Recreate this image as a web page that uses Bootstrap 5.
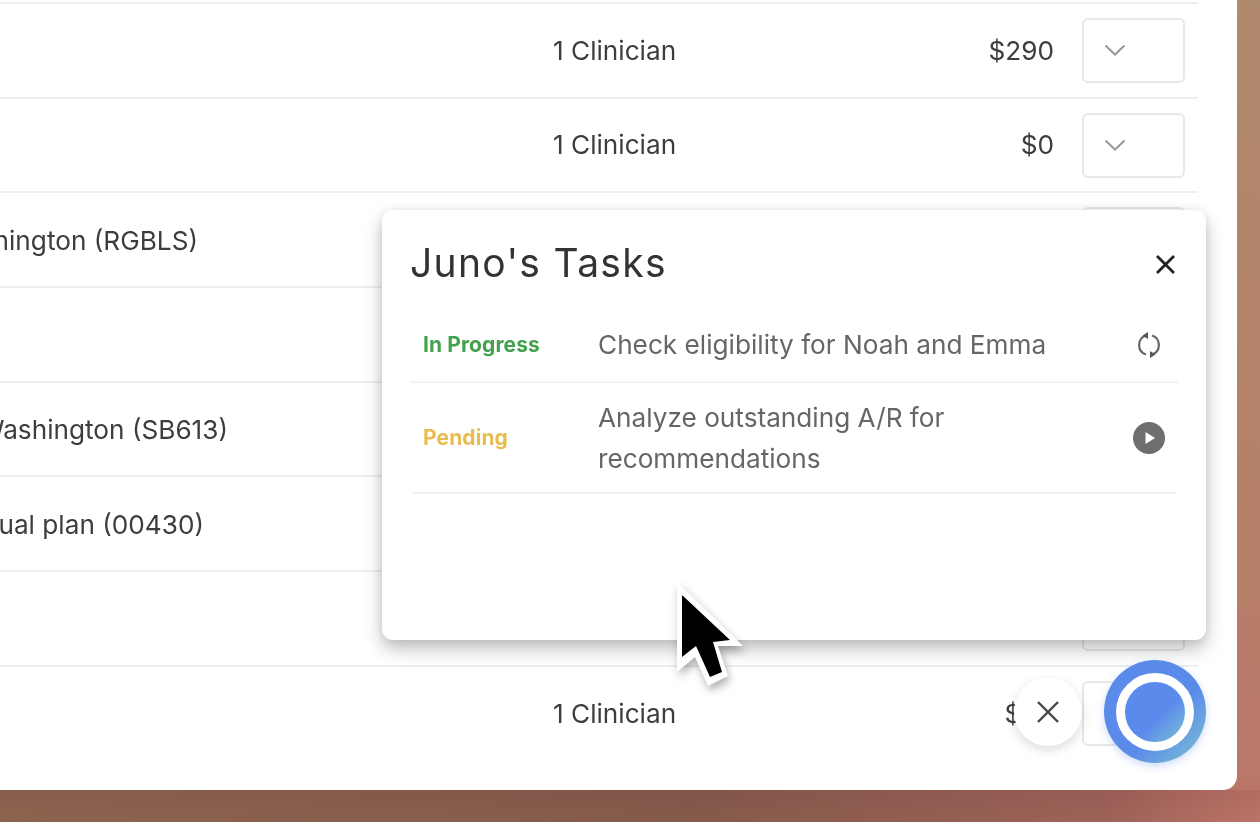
<!doctype html>
<html lang="en">
<head>
<meta charset="utf-8">
<title>Juno's Tasks</title>
<link href="https://cdn.jsdelivr.net/npm/bootstrap@5.3.0/dist/css/bootstrap.min.css" rel="stylesheet">
<style>
html,body{height:100%;margin:0;overflow:hidden}
body{width:1260px;height:822px;position:relative;font-family:Inter,"Liberation Sans",sans-serif;color:#3d3d3d;
 background:linear-gradient(180deg,rgba(125,80,68,.25),rgba(150,110,80,.2)) bottom/100% 32px no-repeat,linear-gradient(90deg,#8b624f,#82574a 55%,#a0605a 88%,#c5766c) bottom/100% 32px no-repeat,linear-gradient(180deg,#b08a6d,#b67e69 70%,#bb7669)}
.sheet{width:1237px;height:790px;background:#fff;border-bottom-right-radius:14px;padding-top:2px;overflow:hidden}
.plan-row{position:relative;height:94.7px;width:1198px;border-top:2px solid #eeeeee;font-size:26.200px}
.plan-name{flex:0 0 auto;justify-content:flex-end;overflow:hidden;white-space:nowrap;margin-top:2px}
.w-rgbls{width:198px}.w-sb{width:228px}.w-annual{width:204px}
.plan-seats{position:absolute;left:553px;white-space:nowrap}
.plan-price{position:absolute;right:144px;white-space:nowrap}
.plan-select{position:absolute;left:1082px;width:103px;height:65px;border:2px solid #e8e8e8;border-radius:6px;background:#fff;padding:0 0 0 20px;display:flex;align-items:center}
.task-panel{position:absolute;left:382px;top:210px;width:824px;height:430px;border:0;border-radius:11px;background:#fff;box-shadow:0 9px 18px rgba(0,0,0,.25),0 0 12px rgba(0,0,0,.08);padding:0 28px}
.panel-title{font-size:39px;font-weight:400;letter-spacing:1.300px;color:#333;margin:0;line-height:1}
.panel-head{height:104px;padding-bottom:0}
.panel-close{background:none;border:0;padding:0;line-height:0;margin-right:2px;margin-top:4px}
.list-group-flush>.task-row,.list-group-flush>.task-row:last-child{border-color:#f2f2f2;border-width:0 0 2px;padding:0;display:flex;align-items:center;background:transparent}
.list-group-flush>.task-a{height:69px;padding-bottom:6px}
.list-group-flush>.task-b{height:111px;padding-top:1px}
.task-status{flex:0 0 188px;padding-left:13px;font-size:21px;font-weight:700;letter-spacing:.1px}
.st-green{color:#43a24d}.st-yellow{color:#e8bd50}
.task-text{flex:1;font-size:26.200px;line-height:41px;color:#666;padding-right:60px}
.task-icon{flex:0 0 32px;display:flex;justify-content:center;line-height:0;margin-right:13px}
.fab-close{position:absolute;left:1014px;top:678px;width:68px;height:68px;border:0;border-radius:50%;background:#fff;box-shadow:0 4px 12px rgba(0,0,0,.14);display:flex;align-items:center;justify-content:center;padding:0}
.fab-orb{position:absolute;left:1104px;top:660px;width:102px;height:103px;border:0;border-radius:50%;padding:0;background:linear-gradient(135deg,#5b8bea 60%,#7fc4d0);box-shadow:0 3px 8px rgba(91,139,234,.3);display:flex;align-items:center;justify-content:center}
.orb-core{width:78px;height:78px;border-radius:50%;border:9px solid #fff;background:linear-gradient(135deg,#5a8aec 58%,#7dc3d2)}
.pointer{position:absolute;left:670px;top:575px;filter:drop-shadow(2px 5px 4px rgba(0,0,0,.3))}
.soft{filter:blur(.7px)}
</style>
</head>
<body>
<main class="sheet soft">
  <div class="plan-row d-flex align-items-center"><span class="plan-seats">1 Clinician</span><span class="plan-price">$290</span>
    <button class="plan-select" aria-label="Open"><svg width="22" height="12" viewBox="0 0 22 12"><path d="M1.500 1.500 11 10.500 20.500 1.500" fill="none" stroke="#999" stroke-width="2"/></svg></button></div>
  <div class="plan-row d-flex align-items-center"><span class="plan-seats">1 Clinician</span><span class="plan-price">$0</span>
    <button class="plan-select" aria-label="Open"><svg width="22" height="12" viewBox="0 0 22 12"><path d="M1.500 1.500 11 10.500 20.500 1.500" fill="none" stroke="#999" stroke-width="2"/></svg></button></div>
  <div class="plan-row d-flex align-items-center"><span class="plan-name d-flex w-rgbls">Regence Washington (RGBLS)</span>
    <button class="plan-select" aria-label="Open"></button></div>
  <div class="plan-row d-flex align-items-center"></div>
  <div class="plan-row d-flex align-items-center"><span class="plan-name d-flex w-sb">Premera Washington (SB613)</span></div>
  <div class="plan-row d-flex align-items-center"><span class="plan-name d-flex w-annual">Individual plan (00430)</span></div>
  <div class="plan-row d-flex align-items-center"><button class="plan-select" aria-label="Open"></button></div>
  <div class="plan-row d-flex align-items-center"><span class="plan-seats">1 Clinician</span><span class="plan-price">$90</span>
    <button class="plan-select" aria-label="Open"></button></div>
</main>

<section class="card task-panel soft">
  <div class="panel-head d-flex justify-content-between align-items-center">
    <h2 class="panel-title">Juno's Tasks</h2>
    <button class="panel-close" aria-label="Close"><svg width="21" height="21" viewBox="0 0 21 21"><path d="M2 2 19 19M19 2 2 19" stroke="#222" stroke-width="2.800" fill="none"/></svg></button>
  </div>
  <ul class="list-group list-group-flush">
    <li class="list-group-item task-row task-a">
      <span class="task-status st-green">In Progress</span>
      <span class="task-text">Check eligibility for Noah and Emma</span>
      <span class="task-icon"><svg width="28" height="28" viewBox="0 0 28 28" fill="none" stroke="#666" stroke-width="2.200"><path d="M11 4.500A10 10 0 0 0 11 23.500"/><path d="M17 23.500A10 10 0 0 0 17 4.500"/><path d="M13 1 7.500 4.500 13 8Z" fill="#555" stroke="none"/><path d="M15 20 20.500 23.500 15 27Z" fill="#555" stroke="none"/></svg></span>
    </li>
    <li class="list-group-item task-row task-b">
      <span class="task-status st-yellow">Pending</span>
      <span class="task-text">Analyze outstanding A/R for recommendations</span>
      <span class="task-icon"><svg width="32" height="32" viewBox="0 0 32 32"><circle cx="16" cy="16" r="16" fill="#6e6e6e"/><path d="M12.500 10 22 16 12.500 22Z" fill="#fff"/></svg></span>
    </li>
  </ul>
</section>

<button class="fab-close soft" aria-label="Dismiss"><svg width="24" height="24" viewBox="0 0 24 24"><path d="M2 2 22 22M22 2 2 22" stroke="#444" stroke-width="2.400" fill="none"/></svg></button>
<button class="fab-orb soft" aria-label="Juno"><span class="orb-core"></span></button>

<svg class="pointer" width="85" height="120" viewBox="670 575 85 120"><path d="M677 582 743 646 718 646 728 676 708 686 695 657 677 672Z" fill="#fff"/><path d="M682 595 730 640 713 642 722 672 710 677 696 646 682 657Z" fill="#000"/></svg>
</body>
</html>
